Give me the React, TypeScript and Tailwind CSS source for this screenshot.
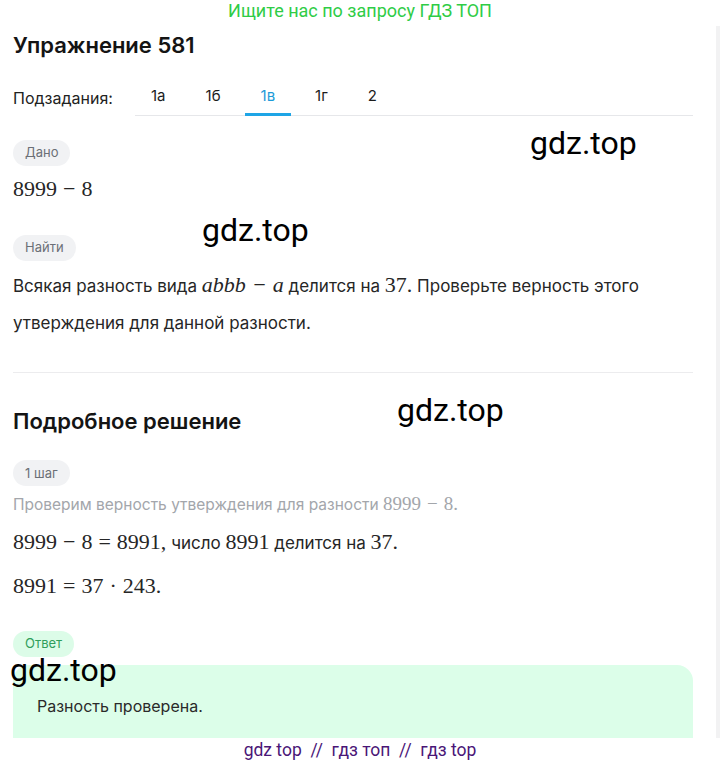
import React from "react";

const SUBTASKS = ["1а", "1б", "1в", "1г", "2"];
const ACTIVE = "1в";

function Pill({ children, green }: { children: React.ReactNode; green?: boolean }) {
  return (
    <span
      className={
        "inline-flex h-[26px] items-center rounded-full px-3 text-[13px] " +
        (green ? "bg-[#dcfce8] text-[#2f9e5b]" : "bg-[#f1f2f4] text-[#6b6f76]")
      }
    >
      {children}
    </span>
  );
}

// math bits are set in a serif face, like the formula renderer on the site
function M({ children, italic }: { children: React.ReactNode; italic?: boolean }) {
  return (
    <span
      className={
        "text-[22px] leading-none font-['Liberation_Serif',serif] " + (italic ? "italic" : "")
      }
    >
      {children}
    </span>
  );
}

const Op = ({ c }: { c: string }) => <span className="mx-[6px]">{c}</span>;

function Watermark({ className }: { className: string }) {
  return (
    <span
      className={
        "pointer-events-none absolute text-[32px] leading-none text-black font-['Roboto','Liberation_Sans',sans-serif] " +
        className
      }
    >
      gdz.top
    </span>
  );
}

export default function App() {
  return (
    <div className="relative w-[720px] bg-white font-['Inter','Noto_Sans',sans-serif] text-[#262626]">
      {/* banner */}
      <div className="flex h-6 justify-center text-[18px] leading-[22px] text-[#2fcc46] font-['Roboto','Liberation_Sans',sans-serif]">
        Ищите нас по запросу ГДЗ ТОП
      </div>

      <div className="flex">
        <main className="w-[716px] pl-[13px]">
          <h1 className="mt-[7px] h-[28px] text-[22px] font-semibold leading-[28px] text-[#141414]">
            Упражнение 581
          </h1>

          {/* subtasks */}
          <div className="mt-[19px] flex w-[680px] items-end">
            <span className="flex h-[37px] w-[122px] items-center text-[16px] text-[#222]">
              Подзадания:
            </span>
            <div className="flex flex-1 gap-2 border-b border-[#e6e7ea]">
              {SUBTASKS.map((t) => (
                <div
                  key={t}
                  className={
                    "relative flex h-[37px] items-center px-4 text-[15px] " +
                    (t === ACTIVE ? "text-[#1d9bd8]" : "text-[#1c1c1c]")
                  }
                >
                  {t}
                  {t === ACTIVE && (
                    <span className="absolute -bottom-[1px] left-0 right-0 h-[3px] bg-[#1ea5e6]" />
                  )}
                </div>
              ))}
            </div>
          </div>

          <div className="mt-[23px]">
            <Pill>Дано</Pill>
          </div>
          <div className="mt-[10px] h-[28px] leading-[28px]">
            <M>
              8999<Op c="−" />8
            </M>
          </div>

          <div className="mt-[30px]">
            <Pill>Найти</Pill>
          </div>
          <p className="mt-[7px] w-[680px] text-[17px] leading-[37px]">
            Всякая разность вида{" "}
            <M italic>
              abbb<Op c="−" />a
            </M>{" "}
            делится на <M>37.</M> Проверьте верность этого утверждения для данной разности.
          </p>

          <div className="mt-[30px] h-px w-[680px] bg-[#ececee]" />

          <h2 className="mt-[34px] h-[28px] text-[22px] font-semibold leading-[28px] text-[#141414]">
            Подробное решение
          </h2>

          <div className="mt-[25px]">
            <Pill>1 шаг</Pill>
          </div>
          <p className="mt-[8px] text-[15.5px] leading-[22px] text-[#a3a6ab]">
            Проверим верность утверждения для разности{" "}
            <span className="text-[19px] leading-none font-['Liberation_Serif',serif]">
              8999<Op c="−" />8.
            </span>
          </p>
          <p className="mt-[12px] text-[17px] leading-[30px]">
            <M>
              8999<Op c="−" />8<Op c="=" />8991,
            </M>{" "}
            число <M>8991</M> делится на <M>37.</M>
          </p>
          <p className="mt-[14px] leading-[30px]">
            <M>
              8991<Op c="=" />37<Op c="·" />243.
            </M>
          </p>

          <div className="mt-[28px]">
            <Pill green>Ответ</Pill>
          </div>
          <div className="mt-[8px] h-[73px] w-[680px] rounded-tl-[16px] rounded-tr-[16px] bg-[#dcfee9] pl-6 pt-[29px] text-[16px] leading-[24px] text-[#2a2a2a]">
            Разность проверена.
          </div>
        </main>
        <div className="mt-[2px] w-[4px] bg-[#f2f2f3]" />
      </div>

      {/* footer */}
      <div className="flex h-6 items-center justify-center text-[17.5px] text-[#4a1677] font-['Roboto','Liberation_Sans',sans-serif]">
        gdz top&nbsp;&nbsp;//&nbsp;&nbsp;гдз топ&nbsp;&nbsp;//&nbsp;&nbsp;гдз top
      </div>

      <Watermark className="left-[530px] top-[127px]" />
      <Watermark className="left-[202px] top-[214px]" />
      <Watermark className="left-[397px] top-[394px]" />
      <Watermark className="left-[10px] top-[654px]" />
    </div>
  );
}
